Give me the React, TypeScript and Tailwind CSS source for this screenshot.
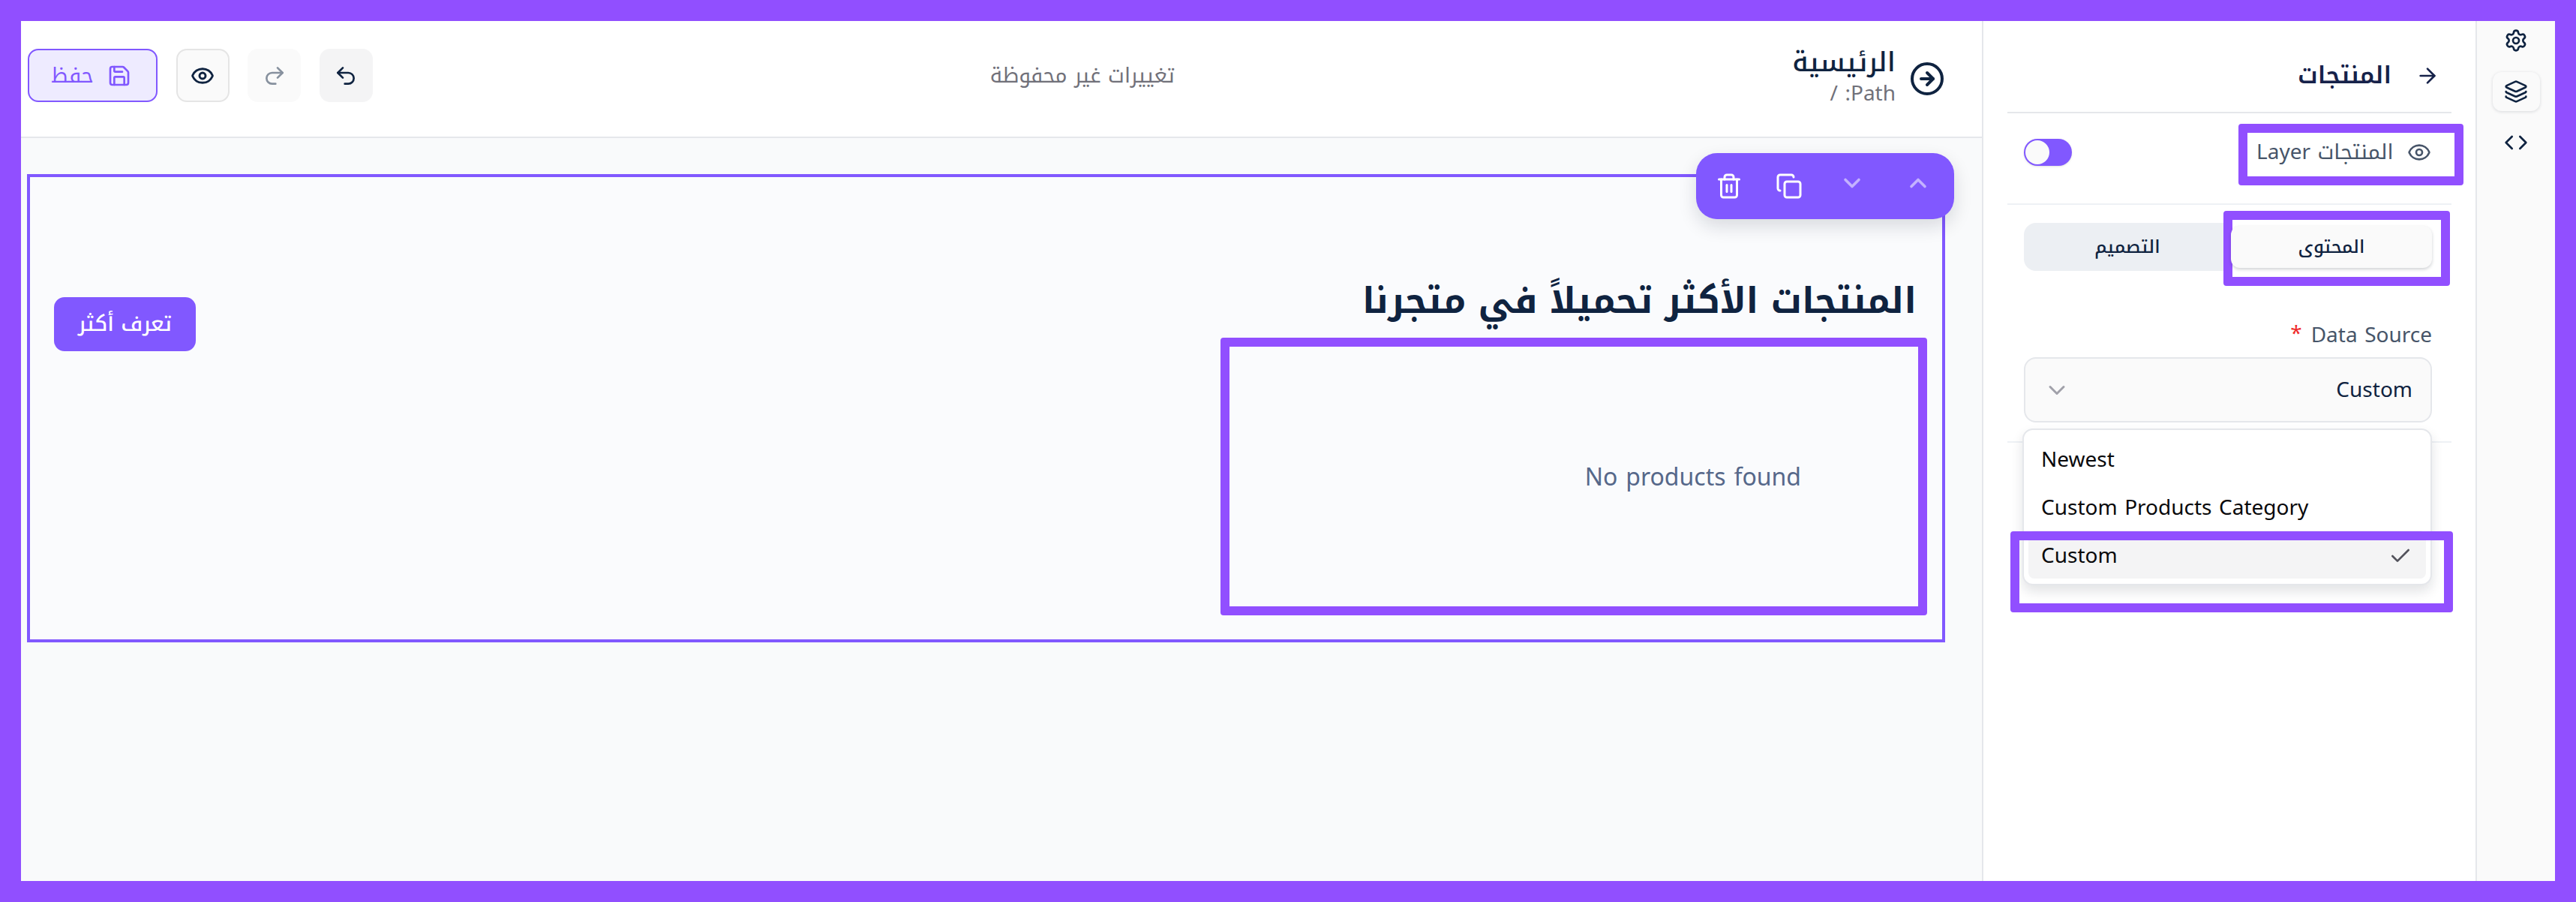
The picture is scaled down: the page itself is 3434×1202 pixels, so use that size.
import { ArrowRight, Check, ChevronDown, ChevronUp, CircleArrowRight, Code, Copy, Eye, Layers, Redo2, Save, Settings, Trash2, Undo2 } from "lucide-react";

const font = { fontFamily: '"Noto Kufi Arabic", "Noto Sans", "DejaVu Sans", sans-serif' };

function Header() {
  return (
    <header className="flex h-[156px] shrink-0 items-center justify-between border-b-2 border-[#e5e7eb] bg-white pb-[9px] pl-[9px] pr-[49px]">
      <div className="flex items-center gap-[24.5px]">
        <button className="flex h-[71px] w-[173px] items-center justify-center gap-[18px] rounded-[14px] border-2 border-[#8158ff] bg-[#eeebff] pr-[4px] text-[28px] leading-[40px] text-[#8158ff]">
          <span dir="rtl">حفظ</span>
          <Save size={32} strokeWidth={2} />
        </button>
        <button className="flex h-[71px] w-[71px] items-center justify-center rounded-[14px] border-2 border-[#e5e5e5] bg-[#fafafa] text-[#0f2340]">
          <Eye size={32} strokeWidth={2.2} />
        </button>
        <button className="flex h-[71px] w-[71px] items-center justify-center rounded-[14px] bg-[#fafafa] text-[#87919e]">
          <Redo2 size={32} strokeWidth={2} />
        </button>
        <button className="flex h-[71px] w-[71px] items-center justify-center rounded-[14px] bg-[#f4f4f5] text-[#0f2340]">
          <Undo2 size={32} strokeWidth={2} />
        </button>
      </div>
      <span dir="rtl" className="text-[28px] leading-[40px] text-[#71717a]">تغييرات غير محفوظة</span>
      <div className="flex items-center gap-[18px]">
        <div dir="rtl" className="flex flex-col">
          <span className="text-[36px] font-medium leading-[48px] text-[#0f2340]">الرئيسية</span>
          <span className="text-[28px] leading-[36px] text-[#71717a]">Path: /</span>
        </div>
        <CircleArrowRight size={48} strokeWidth={2} className="mt-[8px] text-[#0f2340]" />
      </div>
    </header>
  );
}

function Toolbar() {
  return (
    <div className="absolute right-[-16px] top-[-32px] flex h-[88px] w-[344px] items-center rounded-[28px] bg-[#8158ff] pl-[26px] shadow-[0_10px_24px_rgba(15,23,42,0.14)]">
      <Trash2 size={36} strokeWidth={2} className="text-white" />
      <Copy size={36} strokeWidth={2} className="ml-[44px] text-white" />
      <ChevronDown size={36} strokeWidth={2.4} className="ml-[48px] mb-[8px] text-[#c4b2ff]" />
      <ChevronUp size={36} strokeWidth={2.4} className="ml-[52px] mb-[8px] text-[#c4b2ff]" />
    </div>
  );
}

function Canvas() {
  return (
    <section className="flex min-w-0 flex-1 flex-col bg-white">
      <Header />
      <div className="flex-1 bg-[#f9fafb] pb-[48px] pl-[8px] pr-[49px] pt-[48px]">
        <div className="relative flex h-[624px] justify-between border-4 border-[#8158ff] bg-[#fafbfd]">
          <Toolbar />
          <div className="pl-[32px] pt-[160px]">
            <button dir="rtl" className="flex h-[72px] w-[189px] items-center justify-center rounded-[14px] bg-[#8158ff] text-[28px] font-medium leading-[40px] text-white">تعرف أكثر</button>
          </div>
          <div className="flex flex-col items-end pr-[20px] pt-[133px]">
            <h1 dir="rtl" className="mr-[14px] whitespace-nowrap text-[48px] font-bold leading-[64px] text-[#0f2340]">المنتجات الأكثر تحميلاً في متجرنا</h1>
            <div className="mt-[17px] flex h-[370px] w-[942px] items-center justify-end rounded-[4px] border-[12px] border-[#914fff] pr-[156px] pt-[3px]">
              <span className="text-[32px] leading-[44px] text-[#56688a]">No products found</span>
            </div>
          </div>
        </div>
      </div>
    </section>
  );
}

function Panel() {
  return (
    <aside className="relative w-[658px] shrink-0 border-l-2 border-[#e5e7eb] bg-white">
      <div className="mx-[32px] flex h-[123px] items-center justify-end gap-[32px] border-b-2 border-[#e5e7eb] pr-[16px] pt-[24px]">
        <span dir="rtl" className="text-[32px] font-semibold leading-[48px] text-[#16224a]">المنتجات</span>
        <ArrowRight size={32} strokeWidth={2} className="text-[#16224a]" />
      </div>
      <div className="mx-[32px] flex h-[122px] items-start justify-between border-b-2 border-[#eef1f5] pl-[22px]">
        <div className="relative mt-[34px] h-[36px] w-[64px] rounded-full bg-[#8158ff] shadow-sm">
          <div className="absolute left-[2px] top-[2px] h-[32px] w-[32px] rounded-full bg-[#fafafa]" />
        </div>
        <div className="mr-[-16px] mt-[14px] flex h-[82px] w-[300px] items-center rounded-[4px] border-[12px] border-[#914fff] bg-white pb-[6px] pl-[12px]">
          <span dir="rtl" className="text-[28px] leading-[40px] text-[#475569]">المنتجات Layer</span>
          <Eye size={32} strokeWidth={2} className="ml-[18px] text-[#475569]" />
        </div>
      </div>
      <div className="relative ml-[54px] mr-[58px] mt-[24px] flex h-[64px] rounded-[16px] bg-[#eceff3]">
        <div className="flex w-[276px] items-center justify-center">
          <span dir="rtl" className="text-[24px] font-medium leading-[32px] text-[#0f2340]">التصميم</span>
        </div>
        <div className="absolute left-[266px] top-[-16px] h-[100px] w-[302px] rounded-[4px] border-[12px] border-[#914fff] bg-white" />
        <div className="absolute left-[276px] right-0 top-[4px] flex h-[56px] items-center justify-center rounded-[12px] bg-[#fafafa] shadow-[0_2px_4px_rgba(15,23,42,0.2)]">
          <span dir="rtl" className="text-[24px] font-medium leading-[32px] text-[#0f2340]">المحتوى</span>
        </div>
      </div>
      <div dir="rtl" className="ml-[54px] mr-[58px] mt-[64px] flex items-center gap-[12px] text-[28px] leading-[40px] text-[#475569]">
        <span>Data Source</span>
        <span className="mb-[4px] text-[#ef2b2b]">*</span>
      </div>
      <div className="ml-[54px] mr-[58px] mt-[7px] flex h-[87px] items-center justify-between rounded-[16px] border-2 border-[#e5e7eb] bg-[#fafafa] pl-[24px] pr-[24px]">
        <ChevronDown size={36} strokeWidth={2} className="text-[#a1a1aa]" />
        <span className="text-[28px] leading-[40px] text-[#0f2340]">Custom</span>
      </div>
      <div className="mx-[32px] mt-[25px] border-b-2 border-[#eef1f5]" />
      <div className="absolute left-[52px] top-[543px] h-[209px] w-[546px] rounded-[14px] border-2 border-[#e5e7eb] bg-white p-[6px] text-[28px] leading-[40px] text-[#09090b] shadow-[0_8px_16px_rgba(15,23,42,0.12)]">
        <div className="flex h-[64px] items-center pl-[17px] pt-[3px]">Newest</div>
        <div className="flex h-[64px] items-center pl-[17px] pt-[3px]">Custom Products Category</div>
        <div className="flex h-[64px] items-center justify-between rounded-[8px] bg-[#f4f4f5] pl-[17px] pr-[18px] pt-[3px]">
          <span>Custom</span>
          <Check size={32} strokeWidth={2} className="text-[#52525b]" />
        </div>
      </div>
      <div className="absolute left-[36px] top-[680px] h-[108px] w-[590px] rounded-[4px] border-[12px] border-[#914fff]" />
    </aside>
  );
}

function Rail() {
  return (
    <nav className="flex w-[106px] shrink-0 flex-col items-center border-l-2 border-[#e5e7eb] bg-[#fafafa] pt-[10px] text-[#0f2340]">
      <Settings size={32} strokeWidth={2} />
      <div className="mt-[26px] flex h-[52px] w-[63px] items-center justify-center rounded-[12px] bg-[#fafafa] shadow-[0_1px_4px_rgba(15,23,42,0.14)]">
        <Layers size={32} strokeWidth={2} />
      </div>
      <div className="mt-[26px]">
        <Code size={32} strokeWidth={2} />
      </div>
    </nav>
  );
}

export default function App() {
  return (
    <div style={font} className="h-[1202px] w-[3434px] overflow-hidden bg-[#914fff] p-[28px]">
      <div className="flex h-full w-full overflow-hidden bg-white">
        <Canvas />
        <Panel />
        <Rail />
      </div>
    </div>
  );
}
